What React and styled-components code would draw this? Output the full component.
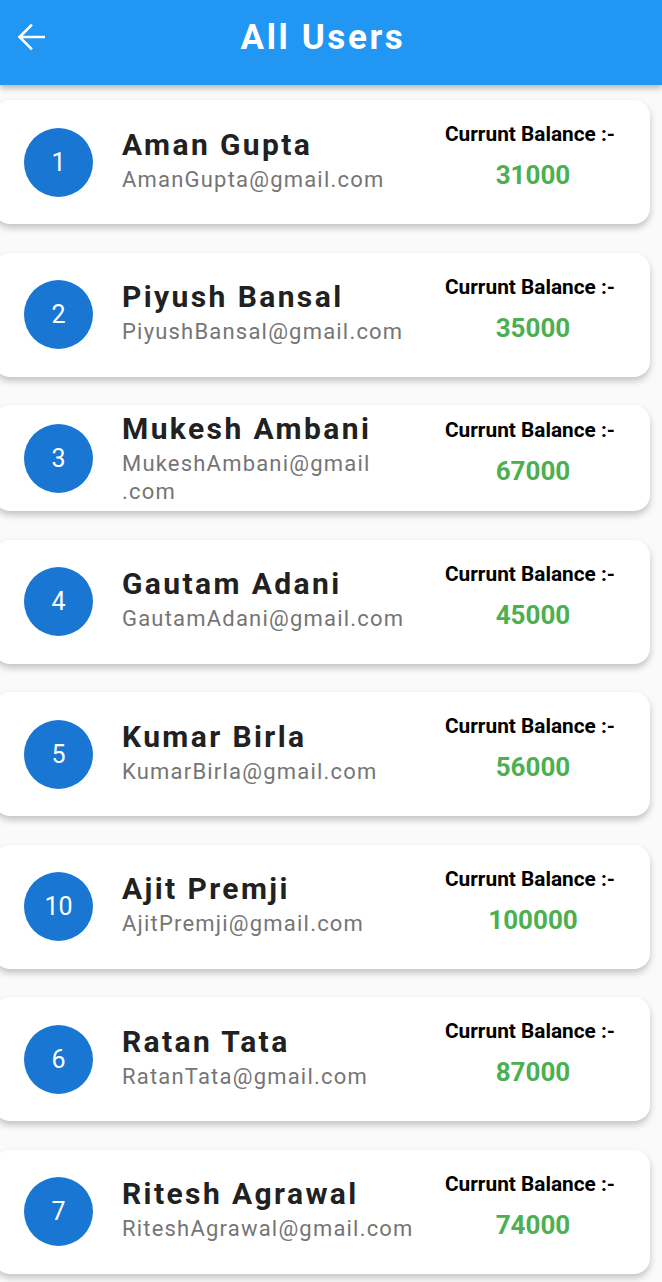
import React from 'react'
import styled, { createGlobalStyle } from 'styled-components'

const users = [
    { id: 1, name: 'Aman Gupta', email: 'AmanGupta@gmail.com', balance: 31000 },
    { id: 2, name: 'Piyush Bansal', email: 'PiyushBansal@gmail.com', balance: 35000 },
    { id: 3, name: 'Mukesh Ambani', email: 'MukeshAmbani@gmail.com', balance: 67000, compact: true },
    { id: 4, name: 'Gautam Adani', email: 'GautamAdani@gmail.com', balance: 45000 },
    { id: 5, name: 'Kumar Birla', email: 'KumarBirla@gmail.com', balance: 56000 },
    { id: 10, name: 'Ajit Premji', email: 'AjitPremji@gmail.com', balance: 100000 },
    { id: 6, name: 'Ratan Tata', email: 'RatanTata@gmail.com', balance: 87000 },
    { id: 7, name: 'Ritesh Agrawal', email: 'RiteshAgrawal@gmail.com', balance: 74000 },
]

// let the email break before the domain ending, the way the app wraps it
const Email = ({ value }) => {
    const dot = value.lastIndexOf('.')
    return (
        <UserEmail>
            {value.slice(0, dot)}<wbr />{value.slice(dot)}
        </UserEmail>
    )
}

const BackArrow = () => (
    <svg width="28" height="28" viewBox="0 0 28 28" fill="none">
        <path d="M27 14H3M14 2.5L2.5 14L14 25.5" stroke="white" strokeWidth="2.6" strokeLinecap="square" />
    </svg>
)

const App = () => {
    return (
        <>
            <GlobalStyle />
            <Page>
                <AppBar>
                    <BackButton><BackArrow /></BackButton>
                    <Title>All Users</Title>
                </AppBar>
                <UserList>
                    {users.map(user => (
                        <UserCard key={user.id} $compact={user.compact}>
                            <Avatar>{user.id}</Avatar>
                            <UserInfo $compact={user.compact}>
                                <UserName>{user.name}</UserName>
                                <Email value={user.email} />
                            </UserInfo>
                            <Balance>
                                <BalanceLabel>Currunt Balance :-</BalanceLabel>
                                <BalanceValue>{user.balance}</BalanceValue>
                            </Balance>
                        </UserCard>
                    ))}
                </UserList>
            </Page>
        </>
    )
}

export default App


const GlobalStyle = createGlobalStyle`
    * {
        box-sizing: border-box;
    }

    body {
        margin: 0;
        background-color: #fafafa;
        font-family: Roboto, "Noto Sans", sans-serif;
    }
`;

const Page = styled.div`
    width: 662px;
    height: 1282px;
    overflow: hidden;
    background-color: #fafafa;
`;

const AppBar = styled.div`
    position: relative;
    z-index: 2;
    height: 85px;
    display: flex;
    align-items: center;
    justify-content: center;
    background-color: #2196f3;
    box-shadow: 0 3px 6px rgba(0, 0, 0, 0.28);
`;

const BackButton = styled.div`
    position: absolute;
    left: 17px;
    top: 23px;
    display: flex;
`;

const Title = styled.h1`
    margin: 0 16px 10px 0;
    color: white;
    font-size: 35px;
    font-weight: 700;
    letter-spacing: 2.6px;
`;

const UserList = styled.div`
    display: flex;
    flex-direction: column;
    gap: 28.5px;
    padding-top: 15px;
`;

const UserCard = styled.div`
    height: ${props => props.$compact ? '106px' : '124px'};
    margin: 0 12px 0 -6px;
    padding: 0 20px 0 30px;
    display: flex;
    align-items: center;
    background-color: white;
    border-radius: 16px;
    box-shadow: 0 4px 7px rgba(0, 0, 0, 0.22);
`;

const Avatar = styled.div`
    width: 69px;
    height: 69px;
    flex-shrink: 0;
    border-radius: 50%;
    background-color: #1976d2;
    color: white;
    display: flex;
    align-items: center;
    justify-content: center;
    font-size: 25px;
`;

const UserInfo = styled.div`
    flex: 1;
    min-width: 0;
    margin-left: 29px;
    padding-bottom: ${props => props.$compact ? '0' : '4px'};
    display: flex;
    flex-direction: column;
`;

const UserName = styled.div`
    margin-bottom: 3px;
    color: #212121;
    font-size: 30px;
    font-weight: 700;
    letter-spacing: 2.4px;
    line-height: 36px;
`;

const UserEmail = styled.div`
    max-width: 294px;
    color: #757575;
    font-size: 22px;
    line-height: 28px;
    letter-spacing: 1.2px;
`;

const Balance = styled.div`
    width: 200px;
    flex-shrink: 0;
    padding-bottom: 12px;
    display: flex;
    flex-direction: column;
    align-items: center;
    gap: 14px;
`;

const BalanceLabel = styled.div`
    color: #000;
    font-size: 20.8px;
    font-weight: 700;
`;

const BalanceValue = styled.div`
    margin-left: 6px;
    color: #4caf50;
    font-size: 26px;
    font-weight: 700;
`;
